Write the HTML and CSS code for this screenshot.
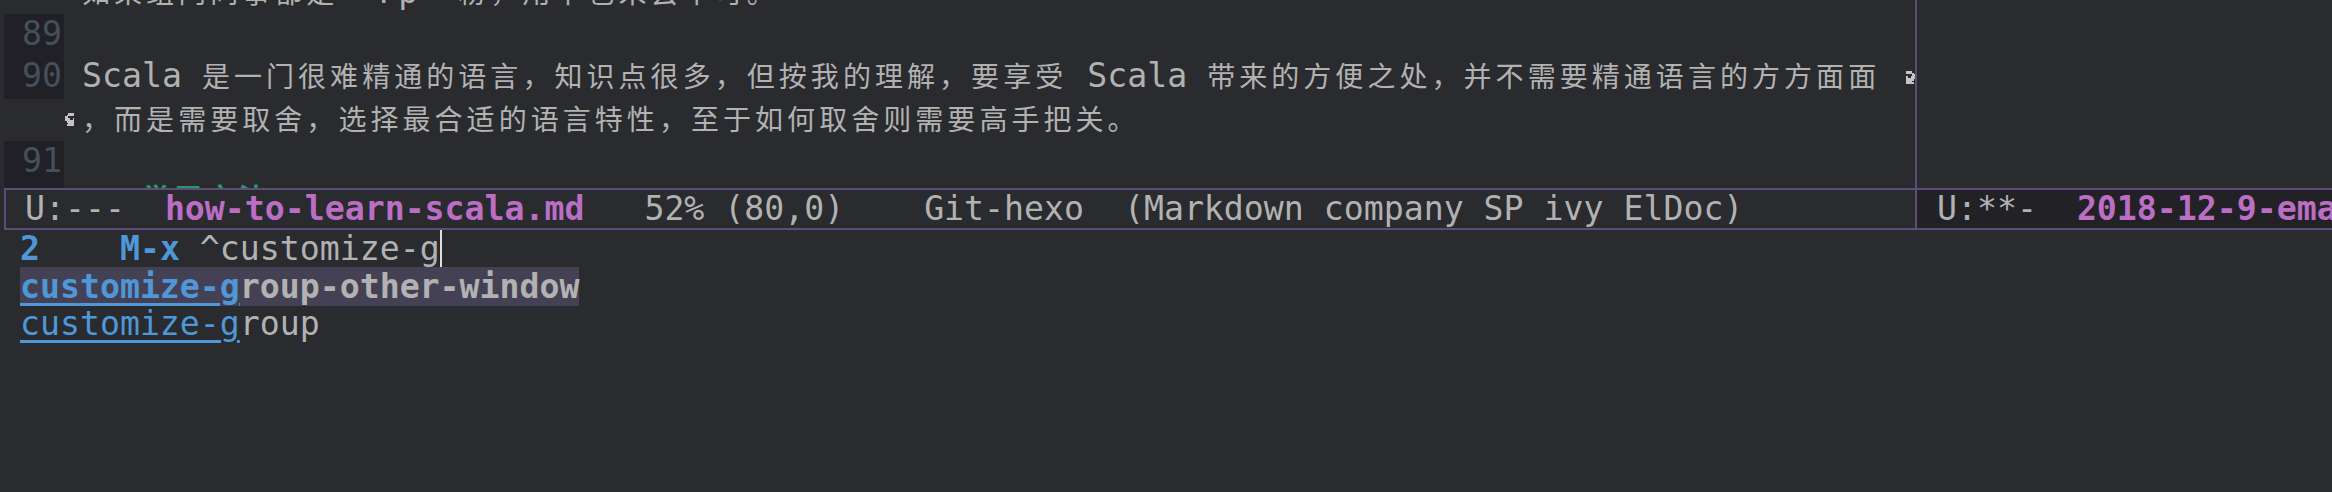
FILE: index.html
```html
<!DOCTYPE html>
<html>
<head>
<meta charset="utf-8">
<link rel="stylesheet" href="styles.css">
</head>
<body>
<div class="frame">
  <div class="windows">
    <div class="win win-left">
      <div class="buffer">
        <div class="rows">
          <div class="row"><span class="gutter blank"></span><span class="fringe"></span><span class="text"><span class="cjk">如果组内同事都是</span> `Fp` <span class="cjk">粉，用下也未尝不可。</span></span><span class="rfringe"></span></div>
          <div class="row"><span class="gutter">89</span><span class="fringe"></span><span class="text"></span><span class="rfringe"></span></div>
          <div class="row"><span class="gutter">90</span><span class="fringe"></span><span class="text">Scala <span class="cjk">是一门很难精通的语言，知识点很多，但按我的理解，要享受</span> Scala <span class="cjk">带来的方便之处，并不需要精通语言的方方面面</span></span><span class="rfringe"><svg class="arrow" viewBox="0 0 8 8" preserveAspectRatio="none" shape-rendering="crispEdges"><path d="M2 0h4v1H2zM2 1h5v1H2zM6 2h2v1H6zM2 3h1v1H2zM5 3h3v1H5zM2 4h6v1H2zM2 5h5v1H2zM2 6h4v1H2zM2 7h5v1H2z"/></svg></span></div>
          <div class="row"><span class="gutter blank"></span><span class="fringe"><svg class="arrow" viewBox="0 0 8 8" preserveAspectRatio="none" shape-rendering="crispEdges"><path d="M2 0h4v1H2zM1 1h5v1H1zM0 2h2v1H0zM0 3h3v1H0zM5 3h1v1H5zM0 4h6v1H0zM1 5h5v1H1zM2 6h4v1H2zM1 7h5v1H1z"/></svg></span><span class="text"><span class="cjk">，而是需要取舍，选择最合适的语言特性，至于如何取舍则需要高手把关。</span></span><span class="rfringe"></span></div>
          <div class="row"><span class="gutter">91</span><span class="fringe"></span><span class="text"></span><span class="rfringe"></span></div>
          <div class="row"><span class="gutter">92</span><span class="fringe"></span><span class="text heading"><span class="delim">## </span><span class="cjk">学习方法</span></span><span class="rfringe"></span></div>
        </div>
      </div>
      <div class="modeline"><span>U:---  </span><span class="bufname">how-to-learn-scala.md</span><span>   52% (80,0)    Git-hexo  (Markdown company SP ivy ElDoc)</span></div>
    </div>
    <div class="win win-right">
      <div class="buffer"></div>
      <div class="modeline active"><span>U:**-  </span><span class="bufname">2018-12-9-emacs-ivy.md</span></div>
    </div>
  </div>
  <div class="minibuffer">
    <div class="mrow"><span class="count">2</span>    <span class="prompt">M-x</span> ^customize-g<span class="cursor"></span></div>
    <div class="mrow"><span class="cand current"><span class="match">customize-g</span>roup-other-window</span></div>
    <div class="mrow"><span class="cand"><span class="match">customize-g</span>roup</span></div>
  </div>
</div>
</body>
</html>
```
FILE: styles.css
```css
html, body {
  margin: 0;
  padding: 0;
  background: #292b2e;
}
body {
  width: 2332px;
  height: 492px;
  overflow: hidden;
  color: #b2b2b2;
  font-family: "DejaVu Sans Mono", "Liberation Mono", monospace;
  font-size: 33.2px;
}
.frame {
  padding-left: 4px;
}
.windows {
  display: flex;
  height: 230px;
}
.win {
  display: flex;
  flex-direction: column;
}
.win-left {
  width: 1913px;
}
.win-right {
  flex: 1;
  min-width: 0;
}
.buffer {
  height: 188px;
  flex: none;
  overflow: hidden;
  box-sizing: border-box;
}
.win-left .buffer {
  border-right: 2px solid #5d4d7a;
}
.rows {
  margin-top: -28.3px;
}
.row {
  display: flex;
  height: 42.3px;
  line-height: 39px;
  white-space: pre;
}
.gutter {
  width: 60px;
  flex: none;
  box-sizing: border-box;
  padding-right: 2px;
  text-align: right;
  background: #212026;
  color: #44505c;
}
.gutter.blank {
  background: transparent;
}
.fringe {
  width: 18px;
  flex: none;
  display: flex;
  align-items: center;
}
.text {
  flex: 1;
  min-width: 0;
  overflow: hidden;
}
.rfringe {
  width: 18px;
  flex: none;
  display: flex;
  align-items: center;
  justify-content: flex-end;
}
.arrow {
  width: 12px;
  height: 13px;
  fill: #c4c4c4;
}
.fringe .arrow {
  margin-left: 1px;
}
.cjk {
  font-family: "Noto Sans CJK SC", "DejaVu Sans Mono", sans-serif;
  font-size: 28px;
  letter-spacing: 4.05px;
}
.heading {
  color: #2d9574;
  font-weight: bold;
  line-height: 28px;
}
.delim {
  color: #292b2e;
}
.modeline {
  height: 42px;
  flex: none;
  box-sizing: border-box;
  border: 2px solid #5d4d7a;
  padding-left: 19px;
  line-height: 38px;
  white-space: pre;
  overflow: hidden;
  background: #292b2e;
}
.modeline.active {
  background: #222226;
  border-left: none;
  padding-left: 20px;
  border-right: none;
}
.bufname {
  color: #bc6ec5;
  font-weight: bold;
}
.minibuffer {
  padding-left: 16px;
}
.mrow {
  height: 37.5px;
  line-height: 37.5px;
  white-space: pre;
}
.count, .prompt {
  color: #4f97d7;
  font-weight: bold;
}
.cursor {
  display: inline-block;
  width: 2px;
  height: 37px;
  vertical-align: top;
  background: #e3dedd;
}
.cand.current {
  background: #444155;
  font-weight: bold;
}
.match {
  color: #4f97d7;
  text-decoration: underline;
  text-decoration-thickness: 3px;
  text-underline-offset: 5px;
}
```
